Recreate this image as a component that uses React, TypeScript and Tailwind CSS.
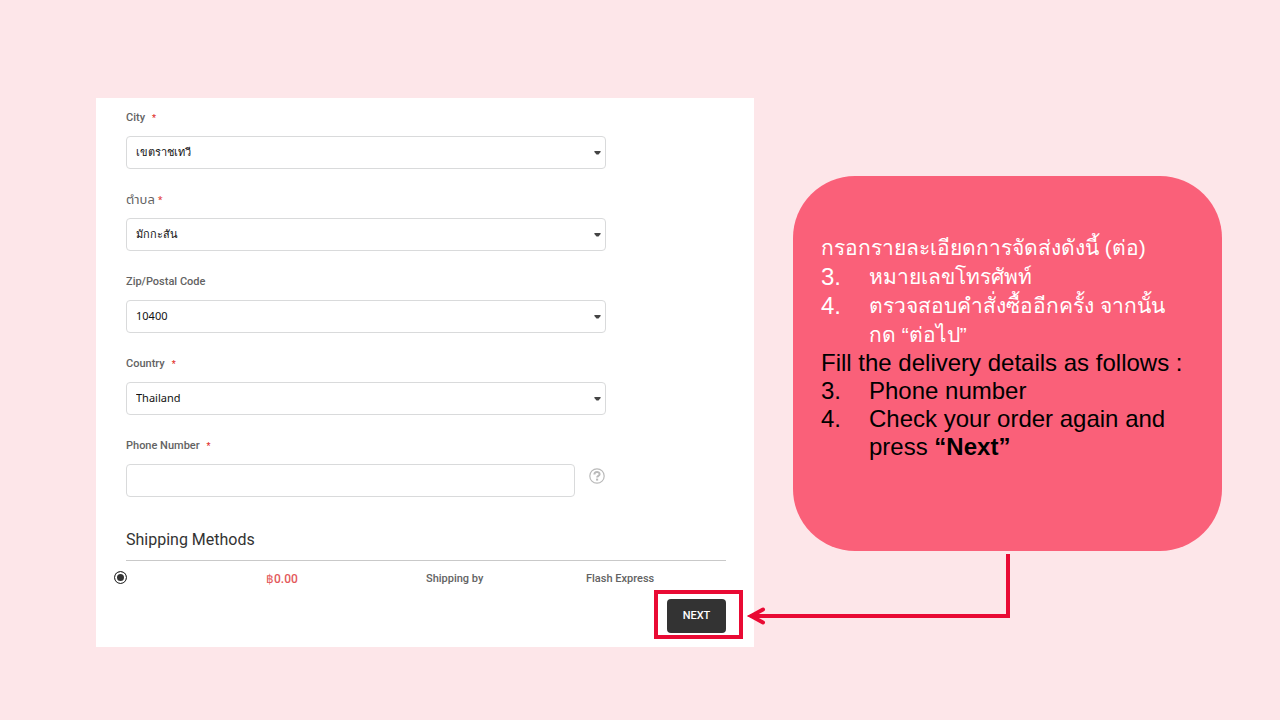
import { useState } from 'react'

const selectFields = [
  { id: 'city', label: 'City', required: true, thai: false, value: 'เขตราชเทวี' },
  { id: 'subdistrict', label: 'ตำบล', required: true, thai: true, value: 'มักกะสัน' },
  { id: 'zip', label: 'Zip/Postal Code', required: false, thai: false, value: '10400' },
  { id: 'country', label: 'Country', required: true, thai: false, value: 'Thailand' },
]

type LabelProps = {
  htmlFor: string
  text: string
  required?: boolean
  thai?: boolean
}

function FieldLabel({ htmlFor, text, required, thai }: LabelProps) {
  return (
    <label
      htmlFor={htmlFor}
      className={[
        'mb-2 flex h-5 items-center leading-5 text-[#636363]',
        thai
          ? "gap-[3px] font-['Noto_Sans_Thai','Noto_Sans',sans-serif] text-[13px]"
          : 'gap-[7px] text-[11px] font-medium',
      ].join(' ')}
    >
      {text}
      {required && <span className="text-[9px] text-[#e02b27]">*</span>}
    </label>
  )
}

function SelectField({ id, label, required, thai, value }: (typeof selectFields)[number]) {
  // Thai values are set a little heavier than the Latin ones
  const isThaiValue = /[\u0e00-\u0e7f]/.test(value)

  return (
    <div>
      <FieldLabel htmlFor={id} text={label} required={required} thai={thai} />
      <div className="relative">
        <select
          id={id}
          defaultValue={value}
          className={[
            "block h-[33px] w-full appearance-none rounded border border-[#d9dadb] bg-white px-[9px] font-['Noto_Sans',sans-serif] text-[11px] text-[#111]",
            isThaiValue ? 'font-medium' : 'font-normal',
          ].join(' ')}
        >
          <option value={value}>{value}</option>
        </select>
        <svg
          viewBox="0 0 7 4"
          className="pointer-events-none absolute top-1/2 right-[5px] h-1 w-[7px] -translate-y-1/2"
          aria-hidden="true"
        >
          <path d="M.4 0h6.2v1L4.5 3.4h-2L.4 1z" fill="#444" />
        </svg>
      </div>
    </div>
  )
}

function ShippingForm() {
  const [phone, setPhone] = useState('')

  return (
    <form
      className="flex min-w-0 flex-col bg-white pt-[10px] pr-7 pb-2 pl-[30px] font-['Roboto','Noto_Sans',sans-serif]"
      onSubmit={(e) => e.preventDefault()}
    >
      <div className="flex w-4/5 flex-col gap-[21px]">
        {selectFields.map((field) => (
          <SelectField key={field.id} {...field} />
        ))}

        <div>
          <FieldLabel htmlFor="phone" text="Phone Number" required />
          <div className="flex gap-[14px]">
            <input
              id="phone"
              type="tel"
              value={phone}
              onChange={(e) => setPhone(e.target.value)}
              className="h-[33px] min-w-0 flex-1 rounded border border-[#d9dadb] bg-white px-[9px] text-[11px] text-[#111]"
            />
            <button type="button" aria-label="Help" className="mt-1 mr-px h-4 w-4 self-start">
              <svg viewBox="0 0 16 16" fill="none" stroke="#bababa" className="h-4 w-4">
                <circle cx="8" cy="8" r="7.2" strokeWidth="1.2" />
                <path d="M5.4 6.4c0-3.2 5.2-3.2 5.2-.2 0 1.8-2.5 1.6-2.5 3.4" strokeWidth="2" />
                <path d="M8.1 10.6v2" strokeWidth="2.1" />
              </svg>
            </button>
          </div>
        </div>
      </div>

      <h2 className="mt-[31px] border-b border-[#c9c9c9] pb-2 text-[16px] leading-6 text-[#333]">
        Shipping Methods
      </h2>

      {/* Shipping method row */}
      <div className="-mx-5 mt-2 grid grid-cols-4 items-start text-[11px] leading-5 font-medium text-[#636363]">
        <div className="flex pt-0.5 pl-2">
          <input
            id="flash"
            type="radio"
            name="shipping"
            defaultChecked
            className="h-[13px] w-[13px] appearance-none rounded-full border border-[#333] bg-[#333] shadow-[inset_0_0_0_2px_white]"
          />
        </div>
        <label htmlFor="flash" className="text-xs leading-5 text-[#e3595b]">฿0.00</label>
        <span>Shipping by</span>
        <span>Flash Express</span>
      </div>

      {/* Highlighted submit button */}
      <div className="-mr-[17px] mt-px self-end border-4 border-[#e90a34] pt-[5px] pr-[13px] pb-[2px] pl-[9px]">
        <button
          type="submit"
          className="flex h-[34px] w-[59px] items-center justify-center rounded bg-[#333] text-[11px] font-medium text-white"
        >
          NEXT
        </button>
      </div>
    </form>
  )
}

function Callout() {
  return (
    <aside className="min-w-0 pt-[78px] font-['Liberation_Sans',sans-serif]">
      <div className="rounded-[62px] bg-[#fa6079] pt-[57px] pr-5 pb-[90px] pl-7 text-2xl">
        <div className="leading-[29px] text-white">
          <p className="text-[21px] leading-[29px]">กรอกรายละเอียดการจัดส่งดังนี้ (ต่อ)</p>
          <ol>
            <li className="flex">
              <span className="w-12 shrink-0">3.</span>
              <span className="text-[21px] leading-[29px]">หมายเลขโทรศัพท์</span>
            </li>
            <li className="flex">
              <span className="w-12 shrink-0">4.</span>
              <span className="text-[21px] leading-[29px]">
                ตรวจสอบคำสั่งซื้ออีกครั้ง จากนั้น
                <br />
                กด “ต่อไป”
              </span>
            </li>
          </ol>
        </div>
        <div className="leading-7 text-black">
          <p>Fill the delivery details as follows :</p>
          <ol>
            <li className="flex">
              <span className="w-12 shrink-0">3.</span>
              <span>Phone number</span>
            </li>
            <li className="flex">
              <span className="w-12 shrink-0">4.</span>
              <span>
                Check your order again and
                <br />
                press <strong>“Next”</strong>
              </span>
            </li>
          </ol>
        </div>
      </div>

      {/* Connector pointing back at the button */}
      <div className="relative mt-[3px] h-16">
        <div className="absolute inset-y-0 right-1/2 -left-[42px] -mr-0.5 border-r-4 border-b-4 border-[#e90a34]" />
        <svg
          viewBox="0 0 20 20"
          className="absolute -bottom-2 -left-[46px] h-5 w-5"
          aria-hidden="true"
        >
          <path d="M0 10 10 6v8z" fill="#e90a34" />
          <path
            d="M16 3.5 4 10l12 6.5"
            fill="none"
            stroke="#e90a34"
            strokeWidth="4"
            strokeLinecap="round"
          />
        </svg>
      </div>
    </aside>
  )
}

export default function App() {
  return (
    <main className="grid min-h-screen grid-cols-[658fr_429fr] items-start gap-[39px] bg-[#fde6e9] pt-[98px] pr-[58px] pb-[73px] pl-24">
      <ShippingForm />
      <Callout />
    </main>
  )
}
